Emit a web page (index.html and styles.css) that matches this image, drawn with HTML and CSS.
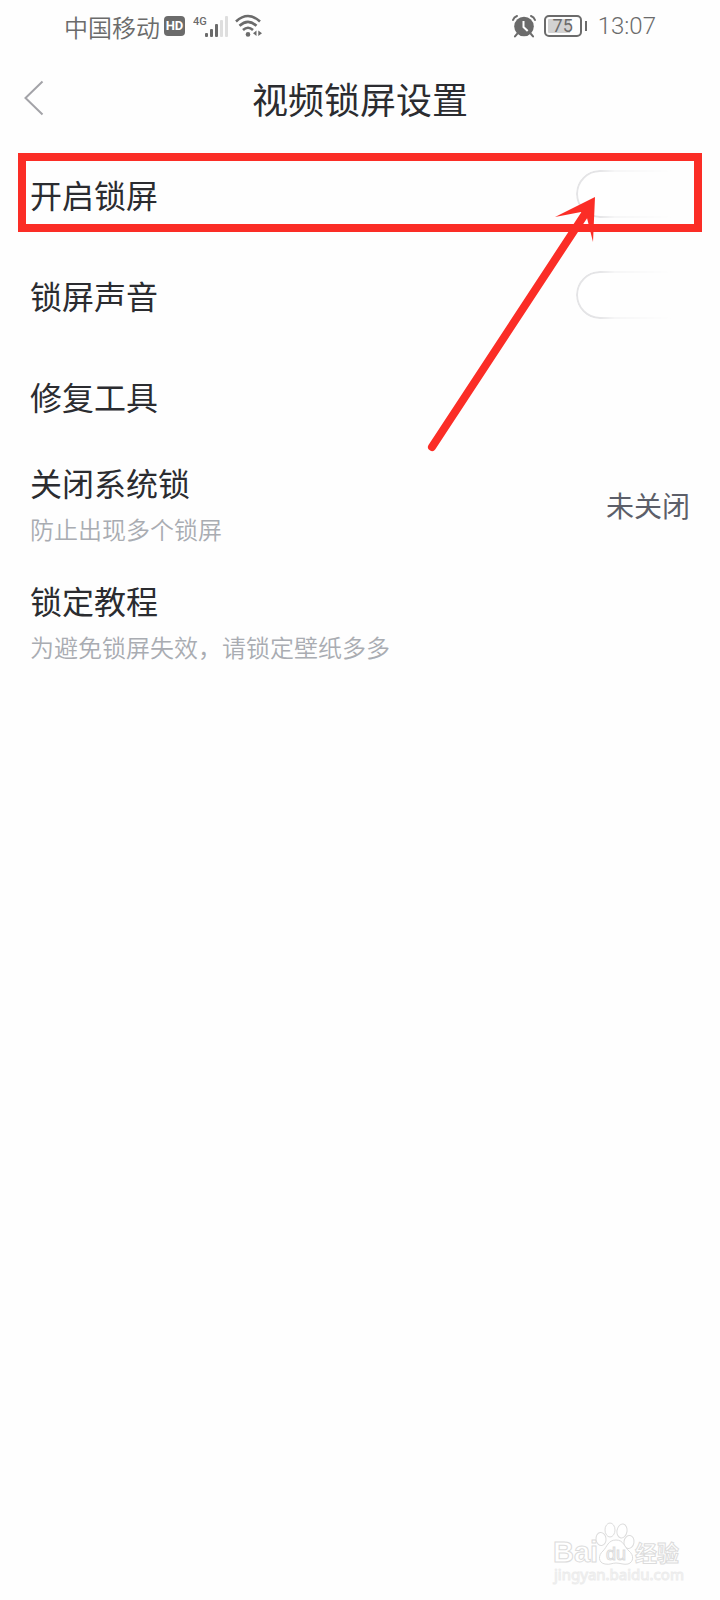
FILE: index.html
```html
<!DOCTYPE html>
<html lang="zh-CN">
<head>
    <meta charset="UTF-8">
    <meta name="viewport" content="width=device-width, initial-scale=1.0">
    <title>视频锁屏设置</title>
    <link rel="stylesheet" href="styles.css">
</head>
<body>
    <div class="status-bar">
        <div class="status-left">
            <span>中国移动</span>
            <span class="hd">HD</span>
            <svg class="signal" width="36" height="26" viewBox="0 0 36 26">
                <text x="0" y="12" class="network">4G</text>
                <g fill="#6b6b6b">
                    <rect x="12" y="20" width="3" height="4" rx="1"/>
                    <rect x="17" y="16" width="3" height="8" rx="1"/>
                    <rect x="22" y="11" width="3" height="13" rx="1"/>
                </g>
                <g fill="#dedede">
                    <rect x="27" y="7" width="3" height="17" rx="1"/>
                    <rect x="32" y="3" width="3" height="21" rx="1"/>
                </g>
            </svg>
            <svg width="28" height="26" viewBox="0 0 28 26" fill="none" stroke="#6b6b6b" stroke-width="2.6">
                <path d="M1 8.5Q13 -2.5 25 8.5"/>
                <path d="M4.5 12.8Q13 5 21.5 12.8"/>
                <path d="M8 17Q13 12.5 18 17"/>
                <circle cx="13" cy="21.4" r="2.3" fill="#6b6b6b" stroke="none"/>
                <path d="M21.5 17.5V23L18 20.3zM23.3 17.5V23L27 20.3z" fill="#6b6b6b" stroke="none"/>
            </svg>
        </div>
        <div class="status-right">
            <svg width="24" height="24" viewBox="0 0 24 24" fill="none" stroke="#6b6b6b" stroke-width="2">
                <circle cx="12" cy="12.5" r="9.8" fill="#6b6b6b" stroke="none"/>
                <path d="M1 6Q2 3 5 2M19 2Q22 3 23 6M5 20l-2 2.4M19 20l2 2.4" stroke-linecap="round"/>
                <path d="M11.5 7v6l4.2 4" stroke="#fff"/>
            </svg>
            <div class="battery"><span>75</span></div>
            <span class="time">13:07</span>
        </div>
    </div>

    <header class="header">
        <button class="back" aria-label="返回">
            <svg width="20" height="36" viewBox="0 0 20 36" fill="none" stroke="#a3a3a8" stroke-width="2">
                <path d="M18.5 1.5L1.5 18L18.5 34.5"/>
            </svg>
        </button>
        <h1>视频锁屏设置</h1>
    </header>

    <main class="settings">
        <div class="row highlighted">
            <label for="lock">开启锁屏</label>
            <input type="checkbox" class="toggle" id="lock">
            <!-- flecha hacia el interruptor -->
            <svg class="arrow" width="180" height="266" viewBox="0 0 180 266">
                <path d="M12 257L165 24" stroke="#fb2d26" stroke-width="8" stroke-linecap="round"/>
                <path d="M175 7L135 27L161 22L167 28L173 52z" fill="#fb2d26"/>
            </svg>
        </div>
        <div class="row">
            <label for="sound">锁屏声音</label>
            <input type="checkbox" class="toggle" id="sound">
        </div>
        <div class="row">
            <span>修复工具</span>
        </div>
        <div class="row tall">
            <div>
                <h2>关闭系统锁</h2>
                <p>防止出现多个锁屏</p>
            </div>
            <span class="value">未关闭</span>
        </div>
        <div class="row tall">
            <div>
                <h2>锁定教程</h2>
                <p>为避免锁屏失效，请锁定壁纸多多</p>
            </div>
        </div>
    </main>

    <svg class="watermark" width="132" height="66" viewBox="0 0 132 66">
        <text x="1" y="40" class="brand">Bai</text>
        <g>
            <ellipse cx="49" cy="17" rx="5" ry="6.5" transform="rotate(-8 49 17)"/>
            <ellipse cx="58" cy="8" rx="5" ry="7"/>
            <ellipse cx="70" cy="9" rx="5" ry="7" transform="rotate(10 70 9)"/>
            <ellipse cx="77" cy="20" rx="5" ry="6.5" transform="rotate(10 77 20)"/>
            <path d="M64 18C56 18 55 25 51 29C46 33 46 41 53 42C58 43 60 41 64 41C68 41 72 43 76 42C82 40 82 33 77 29C72 25 72 18 64 18z"/>
        </g>
        <text x="54" y="38" class="du">du</text>
        <text x="83" y="39" class="cn">经验</text>
        <text x="2" y="58" class="site">jingyan.baidu.com</text>
    </svg>
</body>
</html>
```
FILE: styles.css
```css
* {
    box-sizing: border-box;
}
body {
    position: relative;
    margin: 0;
    min-height: 100vh;
    background-color: #fefefe;
    color: #2b2c30;
    font-family: "Noto Sans CJK SC", sans-serif;
}
h1, h2, p {
    margin: 0;
    font-weight: normal;
}
.status-bar {
    display: flex;
    justify-content: space-between;
    align-items: center;
    height: 52px;
    padding: 0 64px;
    color: #6b6b6b;
    font-size: 24px;
    font-weight: 350;
}
.status-left, .status-right {
    display: flex;
    align-items: center;
}
.hd {
    margin: 0 8px 0 4px;
    width: 21px;
    height: 20px;
    border-radius: 4px;
    background-color: #6b6b6b;
    color: #fff;
    font: bold 13px/20px Roboto, sans-serif;
    text-align: center;
}
.signal {
    margin-right: 6px;
}
.network {
    fill: #6b6b6b;
    font: 500 11px Roboto, sans-serif;
}
.battery {
    position: relative;
    width: 38px;
    height: 22px;
    margin: 0 16px 0 8px;
    padding: 2px;
    border: 2px solid #6b6b6b;
    border-radius: 5px;
    background: linear-gradient(90deg, #d2d2d2 75%, transparent 75%) content-box;
    font: 18px/14px Roboto, sans-serif;
    text-align: center;
}
/* polo de la batería */
.battery::after {
    content: "";
    position: absolute;
    top: 4px;
    right: -7px;
    width: 2px;
    height: 10px;
    background-color: #6b6b6b;
}
.time {
    font-family: Roboto, sans-serif;
    line-height: 32px;
}
.header {
    display: grid;
    grid-template-columns: 80px 1fr 80px;
    align-items: center;
    height: 91px;
}
.header h1 {
    font-size: 36px;
    text-align: center;
}
.back {
    display: flex;
    padding: 0 24px;
    border: none;
    background: none;
    cursor: pointer;
}
.row {
    position: relative;
    display: flex;
    justify-content: space-between;
    align-items: center;
    height: 101px;
    padding: 0 30px;
    font-size: 32px;
}
.row.tall {
    height: 118px;
}
.row h2 {
    font-size: 32px;
    line-height: 48px;
}
.row p {
    color: #a9acb2;
    font-size: 24px;
    font-weight: 350;
    line-height: 46px;
}
.value {
    color: #5c5f69;
    font-size: 28px;
}
.highlighted::after {
    content: "";
    position: absolute;
    top: 10px;
    right: 18px;
    bottom: 12px;
    left: 18px;
    border: 8px solid #fb2d26;
    pointer-events: none;
}
.arrow {
    position: absolute;
    top: 47px;
    right: 120px;
    z-index: 1;
    pointer-events: none;
}
.toggle {
    appearance: none;
    width: 114px;
    height: 48px;
    margin: 0;
    border: 2px solid #e4e4e6;
    border-radius: 24px;
    background-color: #fff;
    mask-image: linear-gradient(90deg, #000 20%, rgba(0, 0, 0, 0.3) 34%, transparent 84%);
    cursor: pointer;
}
.watermark {
    position: absolute;
    right: 36px;
    bottom: 12px;
    fill: #fff;
    stroke: #dcdcdc;
    stroke-width: 1;
}
.brand {
    font: bold 29px "Liberation Sans", sans-serif;
}
.du {
    font: 18px "Liberation Sans", sans-serif;
}
.cn {
    font: bold 22px "Noto Sans CJK SC", sans-serif;
}
.site {
    font: 15px "Noto Sans", sans-serif;
    stroke: #ececec;
}
```
